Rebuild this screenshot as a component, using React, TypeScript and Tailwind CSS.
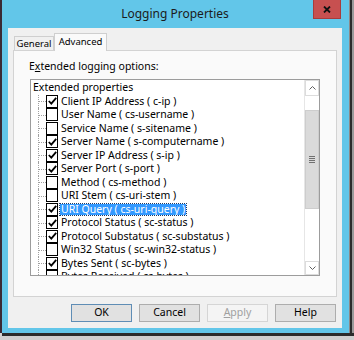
import { JSX } from 'react'

type Field = { label: string; checked: boolean; selected?: boolean }

const FIELDS: Field[] = [
  { label: 'Client IP Address ( c-ip )', checked: true },
  { label: 'User Name ( cs-username )', checked: false },
  { label: 'Service Name ( s-sitename )', checked: false },
  { label: 'Server Name ( s-computername )', checked: true },
  { label: 'Server IP Address ( s-ip )', checked: true },
  { label: 'Server Port ( s-port )', checked: true },
  { label: 'Method ( cs-method )', checked: false },
  { label: 'URI Stem ( cs-uri-stem )', checked: false },
  { label: 'URI Query ( cs-uri-query )', checked: true, selected: true },
  { label: 'Protocol Status ( sc-status )', checked: true },
  { label: 'Protocol Substatus ( sc-substatus )', checked: true },
  { label: 'Win32 Status ( sc-win32-status )', checked: false },
  { label: 'Bytes Sent ( sc-bytes )', checked: true },
  { label: 'Bytes Received ( cs-bytes )', checked: false },
]

export default function App(): JSX.Element {
  return (
    <div className="w-[354px] h-[340px] overflow-hidden flex flex-col bg-[#d4d4d4] font-['Noto_Sans',sans-serif] text-black">
      <div className="flex h-[333px] shrink-0">
        <div className="w-[2px] bg-[#3a2a35]" />
        {/* window frame */}
        <div className="flex-1 bg-[#62c6e9] flex flex-col pl-[6px] pr-[7px] pb-[5px]">
          <div className="h-[28px] shrink-0 relative flex items-center justify-center">
            <span className="text-[12px] text-[#1b1b1b] -mt-[1px]">Logging Properties</span>
            <div className="absolute top-0 right-[1px] w-[28px] h-[19px] bg-[#c75050] border border-[#a83c3c] border-t-0 flex items-center justify-center">
              <svg width="8" height="7" viewBox="0 0 8 7">
                <path d="M1 0.5 L7 6.5 M7 0.5 L1 6.5" stroke="#111" strokeWidth="1.8" />
              </svg>
            </div>
          </div>
          {/* client area */}
          <div className="flex-1 bg-[#f0f0f0] flex flex-col pt-[5px] px-[5px]">
            <div className="flex items-end h-[17px] pl-[1px]">
              <div className="h-[14px] w-[40px] border border-b-0 border-[#cfcfcf] bg-[#f0f0f0] text-[9.5px] leading-[13px] text-center">
                General
              </div>
              <div className="h-[18px] w-[53px] -mb-[1px] relative z-10 border border-b-0 border-[#cfcfcf] bg-[#fafafa] text-[9.5px] leading-[15px] text-center">
                Advanced
              </div>
            </div>
            <div className="h-[247px] border border-[#d3d3d3] bg-[#fafafa] flex flex-col pl-[15px] pt-[9px]">
              <div className="text-[10.5px] leading-[13px]">
                E<u>x</u>tended logging options:
              </div>
              <div className="mt-[6px] ml-[1px] w-[290px] h-[197px] border border-[#9c9c9c] bg-white flex">
                <div className="flex-1 overflow-hidden pt-[1px] pl-[2px] text-[10.5px]">
                  <div className="h-[13.5px] leading-[13.5px]">Extended properties</div>
                  {FIELDS.map((f, i) => (
                    <TreeRow key={f.label} field={f} last={i === FIELDS.length - 1} />
                  ))}
                </div>
                <ScrollBar />
              </div>
            </div>
            <div className="flex justify-end gap-[7px] pr-[1px] mt-[7px]">
              <DlgButton isDefault>OK</DlgButton>
              <DlgButton>Cancel</DlgButton>
              <DlgButton disabled>
                <u>A</u>pply
              </DlgButton>
              <DlgButton>Help</DlgButton>
            </div>
          </div>
        </div>
        <div className="w-[5px] flex">
          <div className="w-[1px] bg-[#8a8a8a]" />
          <div className="w-[2px] bg-[#2b2b2b]" />
          <div className="w-[2px] bg-[#9a9a9a]" />
        </div>
      </div>
      <div className="h-[3px] bg-[#2b2b2b] ml-[2px]" />
      <div className="flex-1 bg-[#cfcfcf]" />
    </div>
  )
}

function TreeRow({ field, last }: { field: Field; last: boolean }): JSX.Element {
  return (
    <div className="h-[13.5px] flex items-center relative">
      {/* tree lines */}
      <div className={`absolute left-[5px] top-0 w-0 border-l border-dotted border-[#a0a0a0] ${last ? 'h-[7px]' : 'h-full'}`} />
      <div className="absolute left-[5px] top-[6.5px] w-[8px] border-t border-dotted border-[#a0a0a0]" />
      <div className="ml-[13px] w-[12px] h-[13px] border-[1.5px] border-black bg-white flex items-center justify-center shrink-0">
        {field.checked && (
          <svg width="9" height="8" viewBox="0 0 9 8">
            <path d="M0.8 4 L3.3 6.6 L8.2 0.8" fill="none" stroke="#000" strokeWidth="1.8" />
          </svg>
        )}
      </div>
      <span
        className={`ml-[2px] px-[1px] leading-[11.5px] whitespace-nowrap ${
          field.selected ? 'bg-[#3399ff] text-white outline outline-1 outline-dotted outline-[#1a3a66]' : ''
        }`}
      >
        {field.label}
      </span>
    </div>
  )
}

function ScrollBar(): JSX.Element {
  return (
    <div className="w-[15px] h-full flex flex-col bg-white border-l border-[#e6e6e6]">
      <div className="h-[16px] border border-[#dcdcdc] bg-white flex items-center justify-center">
        <svg width="7" height="4" viewBox="0 0 7 4">
          <path d="M0.5 3.5 L3.5 0.5 L6.5 3.5" fill="none" stroke="#606060" strokeWidth="1" />
        </svg>
      </div>
      <div className="h-[14px]" />
      <div className="h-[99px] bg-[#dadada] border border-[#cdcdcd] flex items-center justify-center">
        <div className="flex flex-col gap-[1px]">
          <div className="w-[6px] h-[1px] bg-[#707070]" />
          <div className="w-[6px] h-[1px] bg-[#707070]" />
          <div className="w-[6px] h-[1px] bg-[#707070]" />
          <div className="w-[6px] h-[1px] bg-[#707070]" />
        </div>
      </div>
      <div className="flex-1" />
      <div className="h-[14px] border border-[#dcdcdc] bg-white flex items-center justify-center">
        <svg width="7" height="4" viewBox="0 0 7 4">
          <path d="M0.5 0.5 L3.5 3.5 L6.5 0.5" fill="none" stroke="#606060" strokeWidth="1" />
        </svg>
      </div>
    </div>
  )
}

function DlgButton({
  children,
  isDefault,
  disabled,
}: {
  children: React.ReactNode
  isDefault?: boolean
  disabled?: boolean
}): JSX.Element {
  const cls = disabled
    ? 'bg-[#f4f4f4] border-[#d5d5d5] text-[#a0a0a0]'
    : isDefault
      ? 'bg-[#e1e1e1] border-[#5f8db5] text-black'
      : 'bg-[#e1e1e1] border-[#adadad] text-black'
  return (
    <div className={`w-[61px] h-[18px] border flex items-center justify-center text-[10.5px] ${cls}`}>
      {children}
    </div>
  )
}
